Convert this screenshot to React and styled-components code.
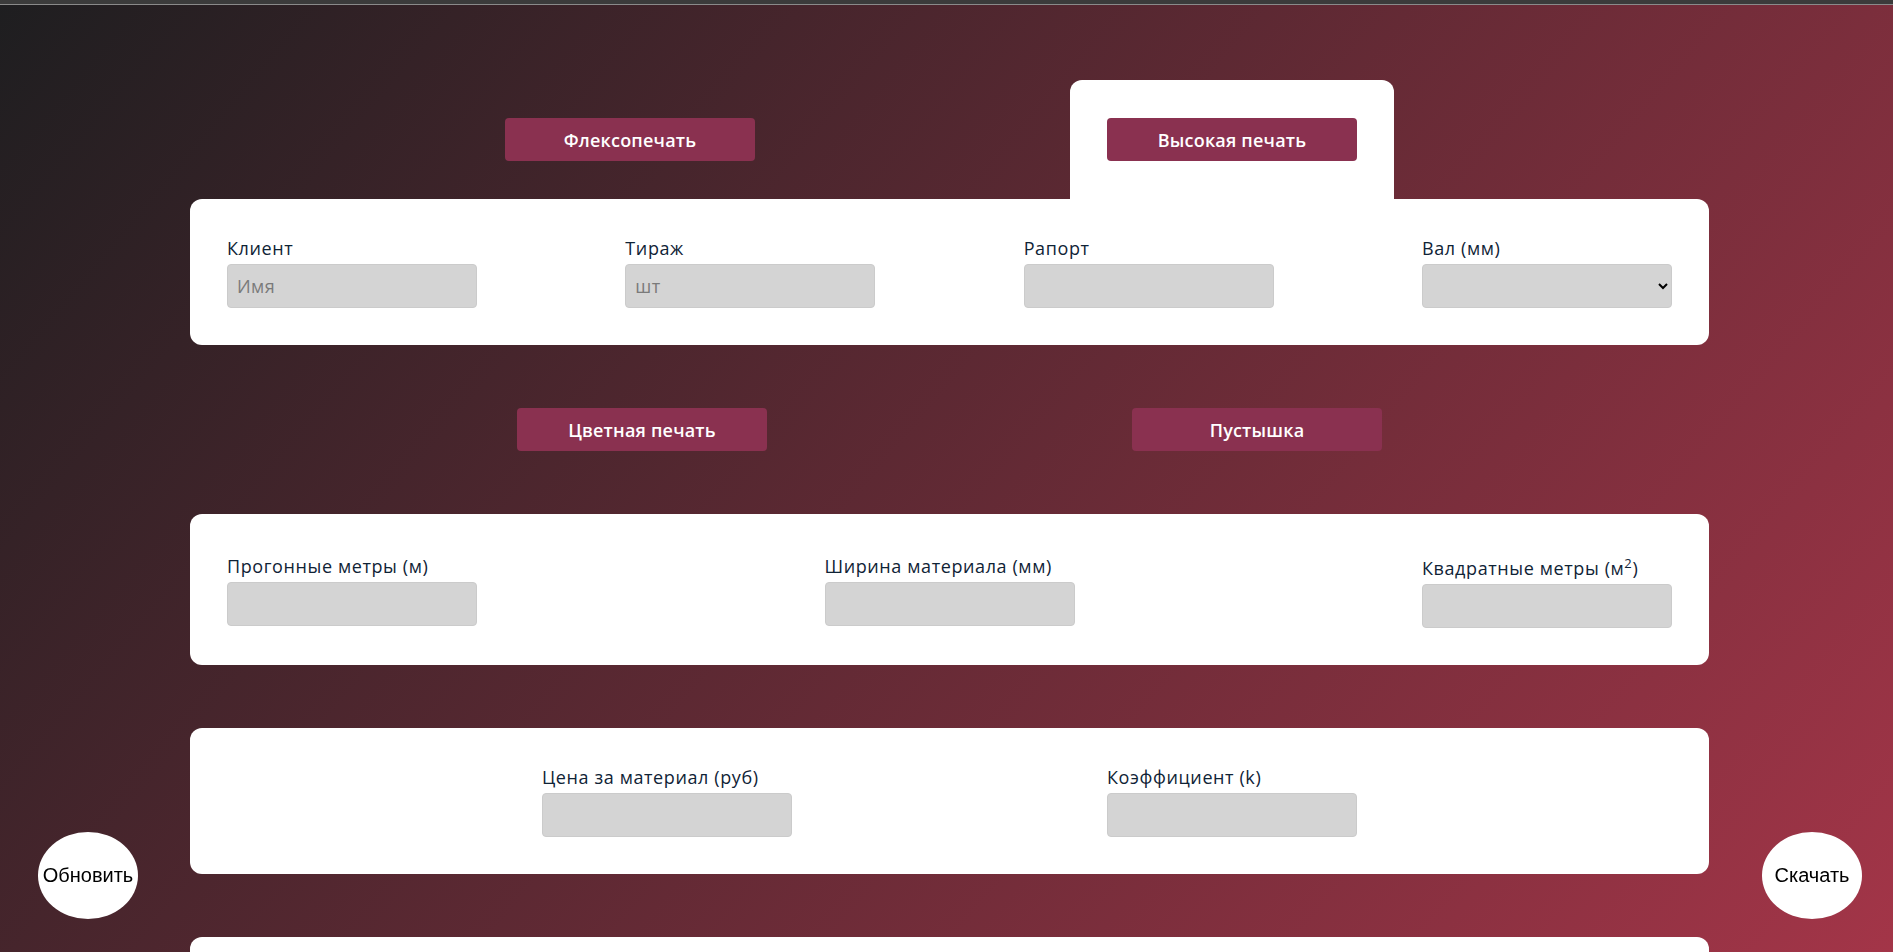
import React from 'react';
import styled, {createGlobalStyle} from 'styled-components';

const GlobalStyle = createGlobalStyle`
  * { box-sizing: border-box; }
  html, body { margin: 0; padding: 0; }
  body {
    font-family: "Open Sans", "Noto Sans", sans-serif;
    min-height: 100vh;
    background: linear-gradient(130deg, #1e1e20 0%, #a33548 100%) fixed;
  }
`
const TopBar = styled.div`
  height: 5px;
  background: #3b3b3b;
  border-bottom: 1px solid #8a8a8a;
`
const Page = styled.main`
  display: flex;
  flex-direction: column;
  gap: 63px;
  padding: 75px 184px 60px 190px;
`
const Section = styled.section`
  display: flex;
  flex-direction: column;
`
const TabRow = styled.div`
  display: flex;
  gap: ${props => props.gap}px;
  padding-left: ${props => props.offset}px;
`
const Tab = styled.div`
  width: 324px;
  height: 119px;
  padding-top: 38px;
  display: flex;
  justify-content: center;
  align-items: flex-start;
  border-radius: 12px 12px 0 0;
  background: ${props => props.active ? '#fff' : 'transparent'};
`
const ModeButton = styled.button`
  width: 250px;
  height: 43px;
  border: none;
  border-radius: 4px;
  background: #8a3150;
  color: #fff;
  font-family: "Open Sans", "Noto Sans", sans-serif;
  font-size: 18px;
  font-weight: 600;
  letter-spacing: 0.2px;
  cursor: pointer;
`
const Card = styled.div`
  display: flex;
  align-items: center;
  justify-content: ${props => props.justify || 'space-between'};
  min-height: 146px;
  padding: 37px;
  background: #fff;
  border-radius: 12px;
`
const Field = styled.label`
  display: flex;
  flex-direction: column;
  gap: 4px;
  width: 250px;
`
const Label = styled.span`
  font-size: 18px;
  line-height: 24px;
  letter-spacing: 0.6px;
  color: #0f2336;
  white-space: nowrap;
  sup { font-size: 13px; vertical-align: 7px; line-height: 24px; }
`
const Input = styled.input`
  width: 250px;
  height: 44px;
  padding: 0 9px;
  border: 1px solid #cbcbcb;
  border-radius: 4px;
  background: #d4d4d4;
  font-family: "Open Sans", "Noto Sans", sans-serif;
  font-size: 18px;
  letter-spacing: 0.4px;
  color: #222;
  outline: none;
  &::placeholder { color: #7a7a7a; }
`
const Select = styled.select`
  width: 250px;
  height: 44px;
  padding: 0 6px;
  border: 1px solid #cbcbcb;
  border-radius: 4px;
  background: #d4d4d4;
  font-family: "Open Sans", "Noto Sans", sans-serif;
  font-size: 18px;
  outline: none;
`
const RoundButton = styled.button`
  position: fixed;
  bottom: 33px;
  ${props => props.side}: ${props => props.side === 'left' ? 38 : 31}px;
  width: 100px;
  height: 87px;
  padding: 0;
  border: none;
  border-radius: 50%;
  background: #fff;
  color: #000;
  font-family: "Liberation Sans", Arial, sans-serif;
  font-size: 20px;
  cursor: pointer;
`

function TextField({label, placeholder}) {
  return (
    <Field>
      <Label>{label}</Label>
      <Input placeholder={placeholder}/>
    </Field>
  )
}

export default function App() {
  return (
    <>
      <GlobalStyle/>
      <TopBar/>
      <Page>
        <Section>
          <TabRow offset={278} gap={278}>
            <Tab><ModeButton>Флексопечать</ModeButton></Tab>
            <Tab active><ModeButton>Высокая печать</ModeButton></Tab>
          </TabRow>
          <Card>
            <TextField label="Клиент" placeholder="Имя"/>
            <TextField label="Тираж" placeholder="шт"/>
            <TextField label="Рапорт"/>
            <Field>
              <Label>Вал (мм)</Label>
              <Select defaultValue="">
                <option value=""></option>
                <option>320</option>
                <option>400</option>
              </Select>
            </Field>
          </Card>
        </Section>
        <TabRow offset={327} gap={365}>
          <ModeButton>Цветная печать</ModeButton>
          <ModeButton>Пустышка</ModeButton>
        </TabRow>
        <Card>
          <TextField label="Прогонные метры (м)"/>
          <TextField label="Ширина материала (мм)"/>
          <Field>
            <Label>Квадратные метры (м<sup>2</sup>)</Label>
            <Input/>
          </Field>
        </Card>
        <Card justify="space-evenly">
          <TextField label="Цена за материал (руб)"/>
          <TextField label="Коэффициент (k)"/>
        </Card>
        <Card/>
      </Page>
      <RoundButton side="left">Обновить</RoundButton>
      <RoundButton side="right">Скачать</RoundButton>
    </>
  )
}
